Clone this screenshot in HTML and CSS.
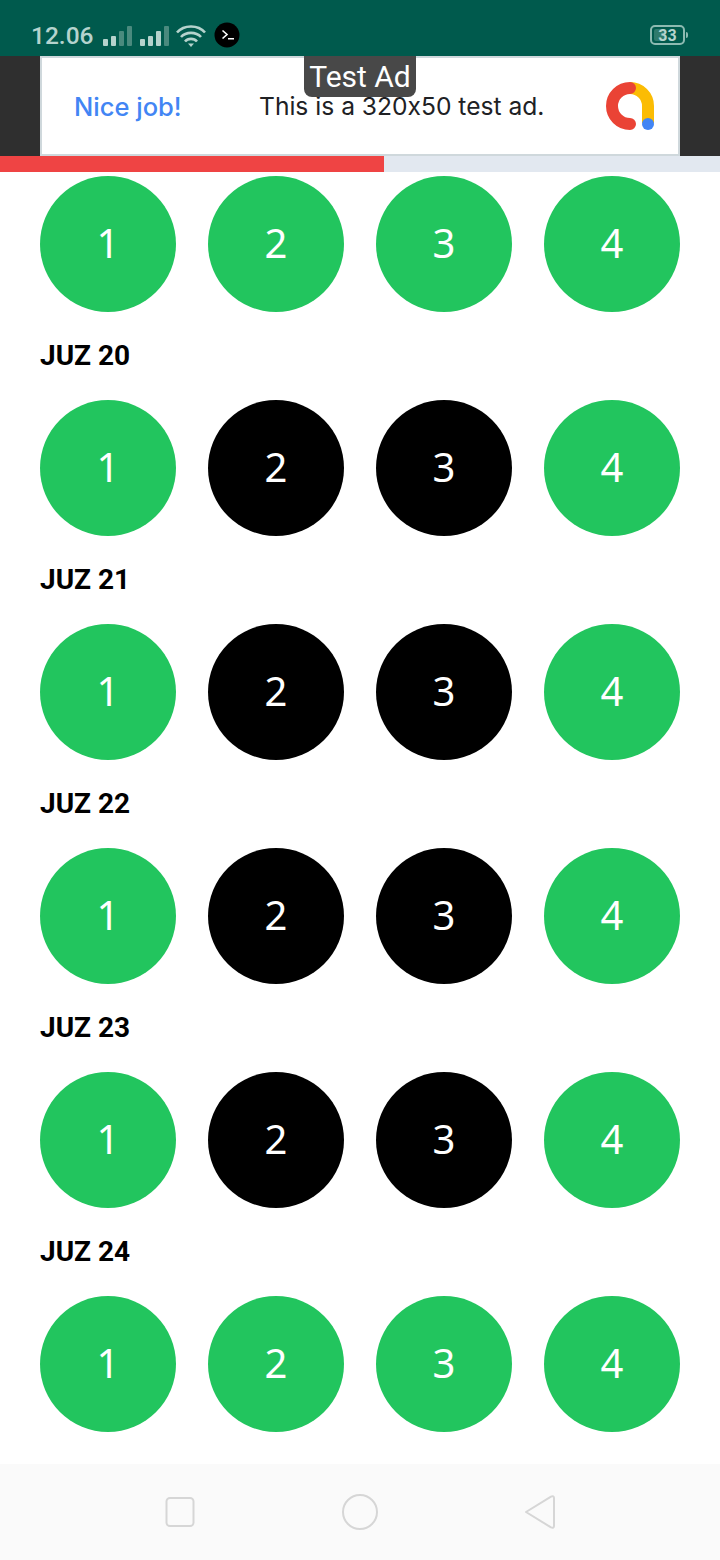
FILE: index.html
```html
<!DOCTYPE html>
<html lang="en">
<head>
    <meta charset="UTF-8">
    <meta name="viewport" content="width=device-width, initial-scale=1.0">
    <title>Juz Progress</title>
    <link rel="stylesheet" href="styles.css">
</head>
<body>

    <div class="status-bar">
        <span class="status-time">12.06</span>
        <svg class="status-icons" width="140" height="30" viewBox="0 0 140 30">
            <g fill="#b5d3cd">
                <rect x="0" y="13" width="5" height="7" rx="1"/>
                <rect x="8" y="10" width="5" height="10" rx="1"/>
                <rect x="37" y="13" width="5" height="7" rx="1"/>
                <rect x="45" y="10" width="5" height="10" rx="1"/>
                <rect x="53" y="5" width="5" height="15" rx="1"/>
            </g>
            <g fill="#4a8a7e">
                <rect x="16" y="5" width="5" height="15" rx="1"/>
                <rect x="24" y="0" width="5" height="20" rx="1"/>
                <rect x="61" y="0" width="5" height="20" rx="1"/>
            </g>
            <g fill="none" stroke="#b5d3cd" stroke-width="2.6">
                <path d="M74 6.500 C81 -1.500 95 -1.500 102 6.500"/>
                <path d="M78 11 C83 5.500 93 5.500 98 11"/>
                <path d="M82 15.500 C85 12 91 12 94 15.500"/>
            </g>
            <path d="M85 17.500 L91 17.500 L88 21 Z" fill="#b5d3cd"/>
            <circle cx="124" cy="9" r="12.500" fill="#000"/>
            <path d="M119.500 4.500 L124 8.500 L119.500 12.500" fill="none" stroke="#fff" stroke-width="1.600"/>
            <rect x="125" y="12" width="6" height="1.500" fill="#fff"/>
        </svg>
        <div class="battery">
            <span class="battery-fill"></span>
            <span class="battery-level">33</span>
        </div>
    </div>

    <div class="ad-strip">
        <div class="ad-box">
            <span class="ad-title">Nice job!</span>
            <span class="ad-text">This is a 320x50 test ad.</span>
            <svg class="ad-logo" width="48" height="48" viewBox="0 0 48 48">
                <path d="M24 6 A18 18 0 0 1 42 24 L42 41" fill="none" stroke="#fbbc04" stroke-width="12"/>
                <path d="M24 6 A18 18 0 0 0 24 42" fill="none" stroke="#ea4335" stroke-width="12" stroke-linecap="round"/>
                <circle cx="42" cy="42" r="6" fill="#4285f4"/>
            </svg>
        </div>
        <span class="ad-badge">Test Ad</span>
    </div>

    <div class="progress">
        <div class="progress-fill"></div>
    </div>

    <div class="content">
        <div class="row">
            <div class="circle">1</div>
            <div class="circle">2</div>
            <div class="circle">3</div>
            <div class="circle">4</div>
        </div>

        <h2 class="juz-title">JUZ 20</h2>
        <div class="row">
            <div class="circle">1</div>
            <div class="circle dark">2</div>
            <div class="circle dark">3</div>
            <div class="circle">4</div>
        </div>

        <h2 class="juz-title">JUZ 21</h2>
        <div class="row">
            <div class="circle">1</div>
            <div class="circle dark">2</div>
            <div class="circle dark">3</div>
            <div class="circle">4</div>
        </div>

        <h2 class="juz-title">JUZ 22</h2>
        <div class="row">
            <div class="circle">1</div>
            <div class="circle dark">2</div>
            <div class="circle dark">3</div>
            <div class="circle">4</div>
        </div>

        <h2 class="juz-title">JUZ 23</h2>
        <div class="row">
            <div class="circle">1</div>
            <div class="circle dark">2</div>
            <div class="circle dark">3</div>
            <div class="circle">4</div>
        </div>

        <h2 class="juz-title">JUZ 24</h2>
        <div class="row">
            <div class="circle">1</div>
            <div class="circle">2</div>
            <div class="circle">3</div>
            <div class="circle">4</div>
        </div>
    </div>

    <div class="nav-bar">
        <div class="nav-item">
            <svg width="32" height="32" viewBox="0 0 32 32">
                <rect x="2.500" y="2" width="27" height="28" rx="3.500" fill="none" stroke="#d6d6d6" stroke-width="2"/>
            </svg>
        </div>
        <div class="nav-item">
            <svg width="38" height="38" viewBox="0 0 38 38">
                <circle cx="19" cy="19" r="17" fill="none" stroke="#d6d6d6" stroke-width="2"/>
            </svg>
        </div>
        <div class="nav-item">
            <svg width="32" height="36" viewBox="0 0 32 36">
                <path d="M2 18 L27 2.600 Q30 1.500 30 4 L30 32 Q30 34.500 27 33.400 Z" fill="none" stroke="#d6d6d6" stroke-width="2" stroke-linejoin="round"/>
            </svg>
        </div>
    </div>

</body>
</html>
```

FILE: styles.css
```css
* {
    box-sizing: border-box;
}

body {
    font-family: 'Roboto', sans-serif;
    width: 720px;
    height: 1560px;
    margin: 0;
    display: flex;
    flex-direction: column;
    background-color: #fff;
    overflow: hidden;
}

.status-bar {
    height: 56px;
    flex-shrink: 0;
    display: flex;
    align-items: center;
    padding: 14px 31px 0;
    background-color: #005a4d;
    color: #b5d3cd;
}

.status-time {
    font-size: 24.500px;
    font-weight: 500;
    margin-right: 9px;
}

.status-icons {
    overflow: visible;
    margin-top: 11px;
}

.battery {
    position: relative;
    width: 35px;
    height: 20px;
    margin-left: auto;
    margin-right: 4px;
    border: 2px solid #8dbab1;
    border-radius: 5px;
    display: flex;
    align-items: center;
    justify-content: center;
}

.battery::after {
    content: '';
    position: absolute;
    right: -5px;
    top: 5px;
    width: 2px;
    height: 6px;
    border-radius: 0 2px 2px 0;
    background-color: #8dbab1;
}

.battery-fill {
    position: absolute;
    left: 2px;
    top: 2px;
    bottom: 2px;
    width: 12px;
    border-radius: 2px;
    background-color: #2f7a6c;
}

.battery-level {
    position: relative;
    font-size: 16px;
    font-weight: 700;
}

.ad-strip {
    position: relative;
    height: 100px;
    flex-shrink: 0;
    padding: 0 40px;
    background-color: #2f2f2f;
}

.ad-box {
    height: 100px;
    display: flex;
    align-items: center;
    padding: 0 24px 0 32px;
    border: 2px solid #cfd8dc;
    background-color: #fff;
    font-family: 'Inter', sans-serif;
    font-feature-settings: 'calt' 0;
}

.ad-title {
    font-size: 25.500px;
    font-weight: 500;
    color: #4285f4;
    width: 185px;
}

.ad-text {
    font-size: 24.600px;
    color: #202124;
}

.ad-logo {
    margin-left: auto;
}

.ad-badge {
    position: absolute;
    left: 304px;
    top: 0;
    width: 112px;
    height: 41px;
    line-height: 42px;
    text-align: center;
    font-size: 30px;
    color: #fff;
    background-color: #484848;
    border-radius: 0 0 8px 8px;
}

.progress {
    height: 16px;
    flex-shrink: 0;
    background-color: #e2e8f0;
}

.progress-fill {
    width: 384px;
    height: 100%;
    background-color: #ef4444;
}

.content {
    flex: 1;
    padding: 4px 40px 0;
}

.row {
    display: grid;
    grid-template-columns: repeat(4, 136px);
    justify-content: space-between;
}

.juz-title {
    margin: 0;
    height: 88px;
    line-height: 88px;
    font-size: 28px;
    font-weight: 700;
    color: #000;
}

.circle {
    width: 136px;
    height: 136px;
    padding-bottom: 4px;
    border-radius: 50%;
    display: flex;
    align-items: center;
    justify-content: center;
    font-family: 'Noto Sans', sans-serif;
    font-size: 40px;
    color: #fff;
    background-color: #22c55e;
}

.circle.dark {
    background-color: #000;
}

.nav-bar {
    height: 96px;
    flex-shrink: 0;
    display: flex;
    justify-content: center;
    align-items: center;
    background-color: #fafafa;
}

.nav-item {
    width: 180px;
    display: flex;
    justify-content: center;
}
```
